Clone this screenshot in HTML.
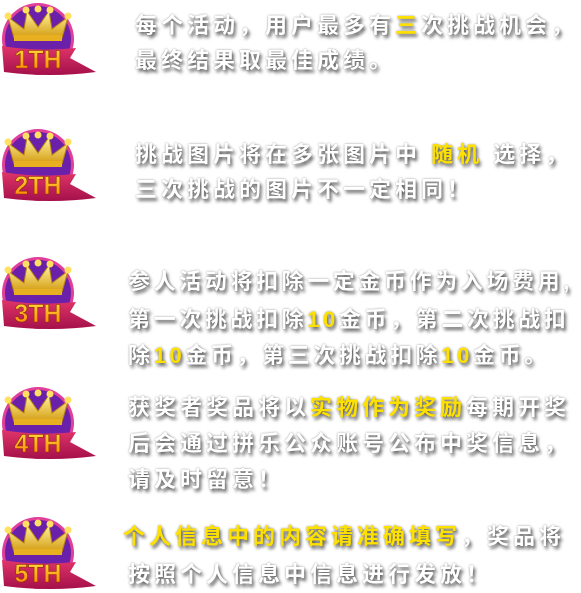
<!DOCTYPE html>
<html><head><meta charset="utf-8"><style>
html,body{margin:0;padding:0;background:#fff;width:581px;height:593px;overflow:hidden;position:relative}
.b{position:absolute;left:0;width:100px;height:76px}
.t{position:absolute;font-family:"Liberation Sans","Noto Sans CJK SC",sans-serif;font-size:22px;color:#fff;white-space:nowrap;letter-spacing:4px;text-shadow:2px 3px 3px rgba(0,0,0,.6),0 0 2px rgba(0,0,0,.4);font-weight:bold;line-height:22px}
.y{color:#ffe100}
.r3{letter-spacing:3.6px}
</style></head><body>
<svg width="0" height="0" style="position:absolute">
<defs>
<linearGradient id="gold" x1="0" y1="0" x2="0" y2="1"><stop offset="0" stop-color="#fff6a0"/><stop offset="1" stop-color="#d49a10"/></linearGradient>
<linearGradient id="rib" x1="0" y1="0" x2="0" y2="1"><stop offset="0" stop-color="#e0356a"/><stop offset="1" stop-color="#a5104a"/></linearGradient>
<linearGradient id="txt" x1="0" y1="0" x2="0" y2="1"><stop offset="0" stop-color="#ffe040"/><stop offset="1" stop-color="#ff7a00"/></linearGradient>
<g id="badge">
<circle cx="38" cy="37" r="36" fill="#e0409a"/>
<circle cx="38" cy="37" r="33" fill="#6a20a8"/>
<path d="M14 36 L8 15 L24 27 L27 9 L38 25 L49 9 L52 27 L68 15 L62 36 Z" fill="url(#gold)" stroke="#b88010" stroke-width="1"/>
<circle cx="8" cy="14" r="3.5" fill="#ffe060"/><circle cx="26" cy="8" r="3.5" fill="#ffe060"/><circle cx="38" cy="7" r="3.5" fill="#ffe060"/><circle cx="50" cy="8" r="3.5" fill="#ffe060"/><circle cx="68" cy="14" r="3.5" fill="#ffe060"/>
<rect x="14" y="33" width="48" height="6" fill="#e8b020"/>
<path d="M2 44 Q38 50 76 46 L70 56 L96 70 Q50 76 4 70 Z" fill="url(#rib)"/>
</g>
</defs>
</svg>
<svg class="b" style="top:2px" viewBox="0 0 100 76"><use href="#badge"/><text x="38" y="66" text-anchor="middle" font-family="Liberation Sans" font-weight="bold" font-size="25" fill="url(#txt)" stroke="#8a3000" stroke-width=".6">1TH</text></svg>
<svg class="b" style="top:128px" viewBox="0 0 100 76"><use href="#badge"/><text x="38" y="66" text-anchor="middle" font-family="Liberation Sans" font-weight="bold" font-size="25" fill="url(#txt)" stroke="#8a3000" stroke-width=".6">2TH</text></svg>
<svg class="b" style="top:256px" viewBox="0 0 100 76"><use href="#badge"/><text x="38" y="66" text-anchor="middle" font-family="Liberation Sans" font-weight="bold" font-size="25" fill="url(#txt)" stroke="#8a3000" stroke-width=".6">3TH</text></svg>
<svg class="b" style="top:386px" viewBox="0 0 100 76"><use href="#badge"/><text x="38" y="66" text-anchor="middle" font-family="Liberation Sans" font-weight="bold" font-size="25" fill="url(#txt)" stroke="#8a3000" stroke-width=".6">4TH</text></svg>
<svg class="b" style="top:516px" viewBox="0 0 100 76"><use href="#badge"/><text x="38" y="66" text-anchor="middle" font-family="Liberation Sans" font-weight="bold" font-size="25" fill="url(#txt)" stroke="#8a3000" stroke-width=".6">5TH</text></svg>

<div class="t" style="left:135px;top:15px">每个活动，用户最多有<span class="y">三</span>次挑战机会，</div>
<div class="t" style="left:135px;top:50px">最终结果取最佳成绩。</div>
<div class="t" style="left:135px;top:144px">挑战图片将在多张图片中 <span class="y">随机</span> 选择，</div>
<div class="t" style="left:135px;top:179px">三次挑战的图片不一定相同！</div>
<div class="t r3" style="left:128px;top:271px">参人活动将扣除一定金币作为入场费用,</div>
<div class="t r3" style="left:128px;top:309px">第一次挑战扣除<span class="y">10</span>金币，第二次挑战扣</div>
<div class="t r3" style="left:128px;top:345px">除<span class="y">10</span>金币，第三次挑战扣除<span class="y">10</span>金币。</div>
<div class="t" style="left:128px;top:397px">获奖者奖品将以<span class="y">实物作为奖励</span>每期开奖</div>
<div class="t" style="left:128px;top:433px">后会通过拼乐公众账号公布中奖信息，</div>
<div class="t" style="left:128px;top:469px">请及时留意！</div>
<div class="t" style="left:123px;top:526px"><span class="y">个人信息中的内容请准确填写</span>，奖品将</div>
<div class="t" style="left:128px;top:564px">按照个人信息中信息进行发放！</div>
</body></html>
